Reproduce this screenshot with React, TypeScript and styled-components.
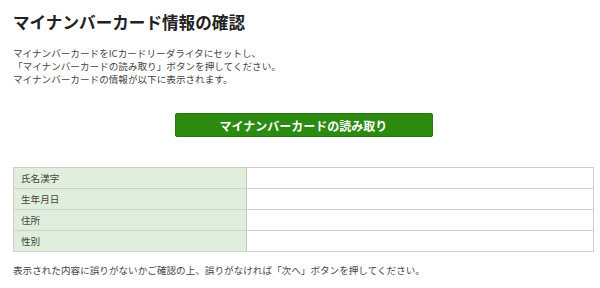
import styled, { createGlobalStyle } from "styled-components";

const GlobalStyle = createGlobalStyle`
  html, body {
    margin: 0;
    padding: 0;
    background: #ffffff;
  }
  body {
    font-family: "Noto Sans CJK JP", "Noto Sans", sans-serif;
    color: #333;
  }
`;

const Page = styled.div`
  width: 600px;
  height: 288px;
  box-sizing: border-box;
  padding: 12px 6px 0 13px;
  overflow: hidden;
`;

const Title = styled.h1`
  margin: 0;
  font-size: 16.6px;
  line-height: 20px;
  font-weight: 700;
  color: #222;
`;

const Lead = styled.p`
  margin: 15px 0 0;
  font-size: 9.6px;
  line-height: 13px;
  color: #444;
`;

const ButtonRow = styled.div`
  display: flex;
  justify-content: center;
  margin-top: 27px;
`;

const ReadButton = styled.button`
  width: 258px;
  height: 24px;
  border: 1px solid #237a0b;
  border-radius: 2px;
  background: #2c8a10;
  color: #fff;
  font-family: "Noto Sans CJK JP", sans-serif;
  font-size: 12px;
  font-weight: 700;
  padding: 0;
  cursor: pointer;
`;

const InfoTable = styled.table`
  width: 100%;
  margin-top: 30px;
  border-collapse: collapse;
  border: 1px solid #cfcfcf;
`;

const LabelCell = styled.th`
  width: 233px;
  height: 21px;
  box-sizing: border-box;
  padding: 0 0 0 7px;
  background: #e0eedc;
  border: 1px solid #cfcfcf;
  border-right: 1px solid #c4c4c4;
  text-align: left;
  font-weight: 400;
  font-size: 9.6px;
  color: #444;
`;

const ValueCell = styled.td`
  border: 1px solid #cfcfcf;
  padding: 0;
`;

const Note = styled.p`
  margin: 12px 0 0;
  font-size: 9.6px;
  line-height: 13px;
  color: #444;
`;

const fields = ["氏名漢字", "生年月日", "住所", "性別"];

export default function App() {
  return (
    <>
      <GlobalStyle />
      <Page>
        <Title>マイナンバーカード情報の確認</Title>
        <Lead>
          マイナンバーカードをICカードリーダライタにセットし、
          <br />
          「マイナンバーカードの読み取り」ボタンを押してください。
          <br />
          マイナンバーカードの情報が以下に表示されます。
        </Lead>
        <ButtonRow>
          <ReadButton>マイナンバーカードの読み取り</ReadButton>
        </ButtonRow>
        <InfoTable>
          <tbody>
            {fields.map((f) => (
              <tr key={f}>
                <LabelCell>{f}</LabelCell>
                <ValueCell />
              </tr>
            ))}
          </tbody>
        </InfoTable>
        <Note>
          表示された内容に誤りがないかご確認の上、誤りがなければ「次へ」ボタンを押してください。
        </Note>
      </Page>
    </>
  );
}
